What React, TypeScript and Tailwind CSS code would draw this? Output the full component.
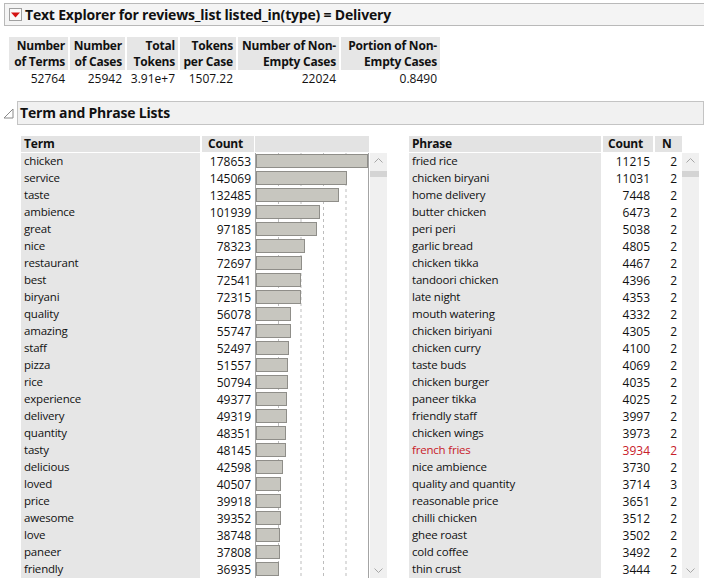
import React from "react";

const MAX = 178653;

const terms: [string, number][] = [
  ["chicken", 178653],
  ["service", 145069],
  ["taste", 132485],
  ["ambience", 101939],
  ["great", 97185],
  ["nice", 78323],
  ["restaurant", 72697],
  ["best", 72541],
  ["biryani", 72315],
  ["quality", 56078],
  ["amazing", 55747],
  ["staff", 52497],
  ["pizza", 51557],
  ["rice", 50794],
  ["experience", 49377],
  ["delivery", 49319],
  ["quantity", 48351],
  ["tasty", 48145],
  ["delicious", 42598],
  ["loved", 40507],
  ["price", 39918],
  ["awesome", 39352],
  ["love", 38748],
  ["paneer", 37808],
  ["friendly", 36935],
];

const phrases: [string, number, number][] = [
  ["fried rice", 11215, 2],
  ["chicken biryani", 11031, 2],
  ["home delivery", 7448, 2],
  ["butter chicken", 6473, 2],
  ["peri peri", 5038, 2],
  ["garlic bread", 4805, 2],
  ["chicken tikka", 4467, 2],
  ["tandoori chicken", 4396, 2],
  ["late night", 4353, 2],
  ["mouth watering", 4332, 2],
  ["chicken biriyani", 4305, 2],
  ["chicken curry", 4100, 2],
  ["taste buds", 4069, 2],
  ["chicken burger", 4035, 2],
  ["paneer tikka", 4025, 2],
  ["friendly staff", 3997, 2],
  ["chicken wings", 3973, 2],
  ["french fries", 3934, 2],
  ["nice ambience", 3730, 2],
  ["quality and quantity", 3714, 3],
  ["reasonable price", 3651, 2],
  ["chilli chicken", 3512, 2],
  ["ghee roast", 3502, 2],
  ["cold coffee", 3492, 2],
  ["thin crust", 3444, 2],
];

const stats: { h: [string, string]; v: string; w: string }[] = [
  { h: ["Number", "of Terms"], v: "52764", w: "w-[59px]" },
  { h: ["Number", "of Cases"], v: "25942", w: "w-[55px]" },
  { h: ["Total", "Tokens"], v: "3.91e+7", w: "w-[51px]" },
  { h: ["Tokens", "per Case"], v: "1507.22", w: "w-[56px]" },
  { h: ["Number of Non-", "Empty Cases"], v: "22024", w: "w-[101px]" },
  { h: ["Portion of Non-", "Empty Cases"], v: "0.8490", w: "w-[99px]" },
];

function Chevron({ down }: { down?: boolean }) {
  return (
    <svg width="9" height="5" viewBox="0 0 9 5">
      <polyline
        points={down ? "0.5,0.5 4.5,4.5 8.5,0.5" : "0.5,4.5 4.5,0.5 8.5,4.5"}
        fill="none"
        stroke="#a6a6a6"
        strokeWidth="1"
      />
    </svg>
  );
}

function Scrollbar() {
  return (
    <div className="flex flex-col">
      <div className="h-[17px]" />
      <div className="h-[425px] bg-[#f0f0f0] flex flex-col items-center">
        <div className="mt-[5px] h-[5px] flex items-center">
          <Chevron />
        </div>
        <div className="mt-[8px] h-[6px] w-full bg-[#d4d4d4]" />
        <div className="flex-1" />
        <div className="mb-[5px] h-[5px] flex items-center">
          <Chevron down />
        </div>
      </div>
    </div>
  );
}

export default function App() {
  return (
    <div className="w-[704px] h-[583px] bg-white overflow-hidden text-[#111] font-['Open_Sans',sans-serif] text-[12px]">
      {/* Title */}
      <div className="ml-[4px] mt-[3px] h-[23px] w-[720px] border border-[#b9b9b9] bg-[#f4f4f4] flex items-center">
        <div className="ml-[4px] w-[13px] h-[13px] border border-[#a0a0a0] bg-[#fafafa] flex items-center justify-center">
          <svg width="9" height="6" viewBox="0 0 9 6">
            <polygon points="0,0.5 9,0.5 4.5,5.5" fill="#d41414" />
          </svg>
        </div>
        <span className="ml-[3px] text-[14px] font-bold leading-none tracking-[-0.2px]">
          Text Explorer for reviews_list listed_in(type) = Delivery
        </span>
      </div>

      {/* Stats */}
      <div className="ml-[9px] mt-[11px] flex gap-[2px]">
        {stats.map((s, i) => (
          <div key={i} className={`flex flex-col ${s.w}`}>
            <div className="h-[33px] bg-[#e6e6e6] text-right pr-[3px] pt-[1px] font-bold leading-[16px] tracking-[-0.2px]">
              <div>{s.h[0]}</div>
              <div>{s.h[1]}</div>
            </div>
            <div className="h-[17px] text-right pr-[3px] leading-[17px]">{s.v}</div>
          </div>
        ))}
      </div>

      {/* Section header */}
      <div className="mt-[14px] flex items-center">
        <div className="ml-[3px] w-[11px] flex items-center">
          <svg width="11" height="11" viewBox="0 0 11 11">
            <polygon points="10,1 10,10 1,10" fill="none" stroke="#8a8a8a" strokeWidth="1" />
          </svg>
        </div>
        <div className="ml-[3px] h-[24px] w-[700px] border border-[#c4c4c4] bg-[#f1f1f1] flex items-center">
          <span className="ml-[2px] text-[14px] font-bold leading-none tracking-[-0.2px]">Term and Phrase Lists</span>
        </div>
      </div>

      {/* Tables */}
      <div className="mt-[11px] flex">
        {/* Term table */}
        <div className="ml-[21px] flex">
          <div className="w-[179px] flex flex-col">
            <div className="h-[16px] bg-[#e3e3e3] pl-[3px] font-bold leading-[16px] tracking-[-0.2px]">Term</div>
            <div className="mt-[1px] h-[425px] bg-[#e6e6e6]">
              {terms.map(([t]) => (
                <div key={t} className="h-[17px] leading-[16.5px] pl-[3px] text-[11.5px] tracking-[-0.2px]">
                  {t}
                </div>
              ))}
            </div>
          </div>
          <div className="ml-[2px] w-[52px] flex flex-col">
            <div className="h-[16px] bg-[#e3e3e3] pl-[6px] font-bold leading-[16px] tracking-[-0.2px]">Count</div>
            <div className="mt-[1px] h-[425px] bg-white">
              {terms.map(([t, c]) => (
                <div key={t} className="h-[17px] leading-[17px] pr-[3px] text-right">
                  {c}
                </div>
              ))}
            </div>
          </div>
          <div className="ml-[1px] w-[114px] flex flex-col">
            <div className="h-[16px] bg-[#e3e3e3]" />
            <div className="mt-[1px] h-[425px] relative bg-white border-l border-r border-[#a4a4a4]">
              <svg className="absolute inset-0" width="112" height="425">
                {[22.5, 45, 67.5, 90].map((x) => (
                  <line key={x} x1={x} y1="0" x2={x} y2="425" stroke="#bdbdbd" strokeDasharray="3,3" />
                ))}
              </svg>
              <div className="relative">
                {terms.map(([t, c]) => (
                  <div key={t} className="h-[17px] pt-[1px]">
                    <div
                      className="h-[14px] bg-[#c7c6bf] border border-[#8f8e89]"
                      style={{ width: Math.round((c / MAX) * 112) }}
                    />
                  </div>
                ))}
              </div>
            </div>
          </div>
          <div className="ml-[1px] w-[17px]">
            <Scrollbar />
          </div>
        </div>

        {/* Phrase table */}
        <div className="ml-[22px] flex">
          <div className="w-[192px] flex flex-col">
            <div className="h-[16px] bg-[#e3e3e3] pl-[3px] font-bold leading-[16px] tracking-[-0.2px]">Phrase</div>
            <div className="mt-[1px] h-[425px] bg-[#e6e6e6]">
              {phrases.map(([p]) => (
                <div
                  key={p}
                  className={`h-[17px] leading-[16.5px] pl-[3px] text-[11.5px] tracking-[-0.2px] ${p === "french fries" ? "text-[#c8202a]" : ""}`}
                >
                  {p}
                </div>
              ))}
            </div>
          </div>
          <div className="ml-[2px] w-[50px] flex flex-col">
            <div className="h-[16px] bg-[#e3e3e3] pl-[5px] font-bold leading-[16px] tracking-[-0.2px]">Count</div>
            <div className="mt-[1px] h-[425px] bg-white">
              {phrases.map(([p, c]) => (
                <div
                  key={p}
                  className={`h-[17px] leading-[17px] pr-[3px] text-right ${p === "french fries" ? "text-[#c8202a]" : ""}`}
                >
                  {c}
                </div>
              ))}
            </div>
          </div>
          <div className="ml-[2px] w-[27px] flex flex-col">
            <div className="h-[16px] bg-[#e3e3e3] pl-[7px] font-bold leading-[16px]">N</div>
            <div className="mt-[1px] h-[425px] bg-white">
              {phrases.map(([p, , n]) => (
                <div
                  key={p}
                  className={`h-[17px] leading-[17px] pr-[5px] text-right ${p === "french fries" ? "text-[#c8202a]" : ""}`}
                >
                  {n}
                </div>
              ))}
            </div>
          </div>
          <div className="w-[17px]">
            <Scrollbar />
          </div>
        </div>
      </div>
    </div>
  );
}
